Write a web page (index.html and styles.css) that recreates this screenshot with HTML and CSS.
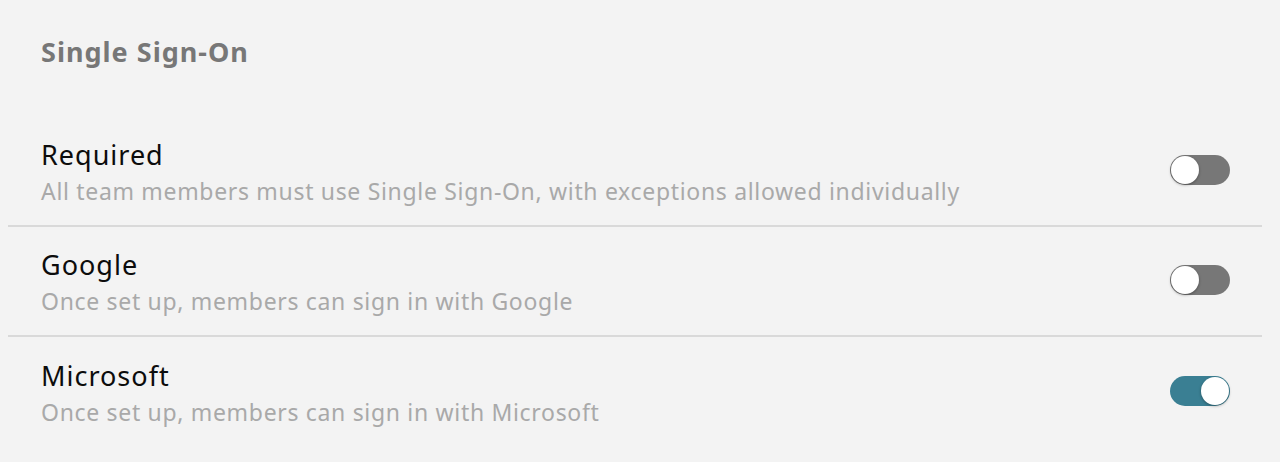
FILE: index.html
```html
<!DOCTYPE html>
<html>
<head>
<meta charset="utf-8">
<link rel="stylesheet" href="styles.css">
</head>
<body>
<div class="page">
  <h2 class="title">Single Sign-On</h2>
  <div class="list">
    <div class="row">
      <div class="text">
        <div class="label">Required</div>
        <div class="desc">All team members must use Single Sign-On, with exceptions allowed individually</div>
      </div>
      <span class="toggle"><span class="knob"></span></span>
    </div>
    <div class="row">
      <div class="text">
        <div class="label">Google</div>
        <div class="desc">Once set up, members can sign in with Google</div>
      </div>
      <span class="toggle"><span class="knob"></span></span>
    </div>
    <div class="row">
      <div class="text">
        <div class="label">Microsoft</div>
        <div class="desc">Once set up, members can sign in with Microsoft</div>
      </div>
      <span class="toggle on"><span class="knob"></span></span>
    </div>
  </div>
</div>
</body>
</html>
```
FILE: styles.css
```css
html, body {
  margin: 0;
  padding: 0;
  background: #f3f3f3;
}
body {
  font-family: "Noto Sans", "Open Sans", sans-serif;
  height: 462px;
  overflow: hidden;
}
.page {
  padding: 0 18px 0 8px;
}
.title {
  margin: 0;
  padding: 34px 0 0 33px;
  height: 36px;
  line-height: 36px;
  font-size: 27px;
  letter-spacing: 1px;
  font-weight: 700;
  color: #777777;
  margin-bottom: 47px;
}
.list {
  display: flex;
  flex-direction: column;
}
.row {
  display: flex;
  align-items: center;
  justify-content: space-between;
  height: 110px;
  padding: 0 32px 0 33px;
  border-bottom: 2px solid #d9d9d9;
  box-sizing: border-box;
}
.row:last-child {
  border-bottom: none;
}
.text {
  display: flex;
  flex-direction: column;
  padding-top: 3px;
}
.label {
  font-size: 27px;
  letter-spacing: 1px;
  line-height: 36px;
  color: #0c0c0c;
}
.desc {
  font-size: 23px;
  letter-spacing: 0.68px;
  line-height: 34px;
  margin-top: 1px;
  color: #a9a9a9;
}
.toggle {
  position: relative;
  width: 60px;
  height: 30px;
  border-radius: 15px;
  background: #777777;
  flex: none;
  margin-top: -2px;
}
.toggle.on {
  background: #3a7f93;
}
.knob {
  position: absolute;
  top: 1px;
  left: 1px;
  width: 28px;
  height: 28px;
  border-radius: 50%;
  background: #ffffff;
  box-shadow: 0 1px 3px rgba(0,0,0,0.35);
}
.toggle.on .knob {
  left: 31px;
}
```
